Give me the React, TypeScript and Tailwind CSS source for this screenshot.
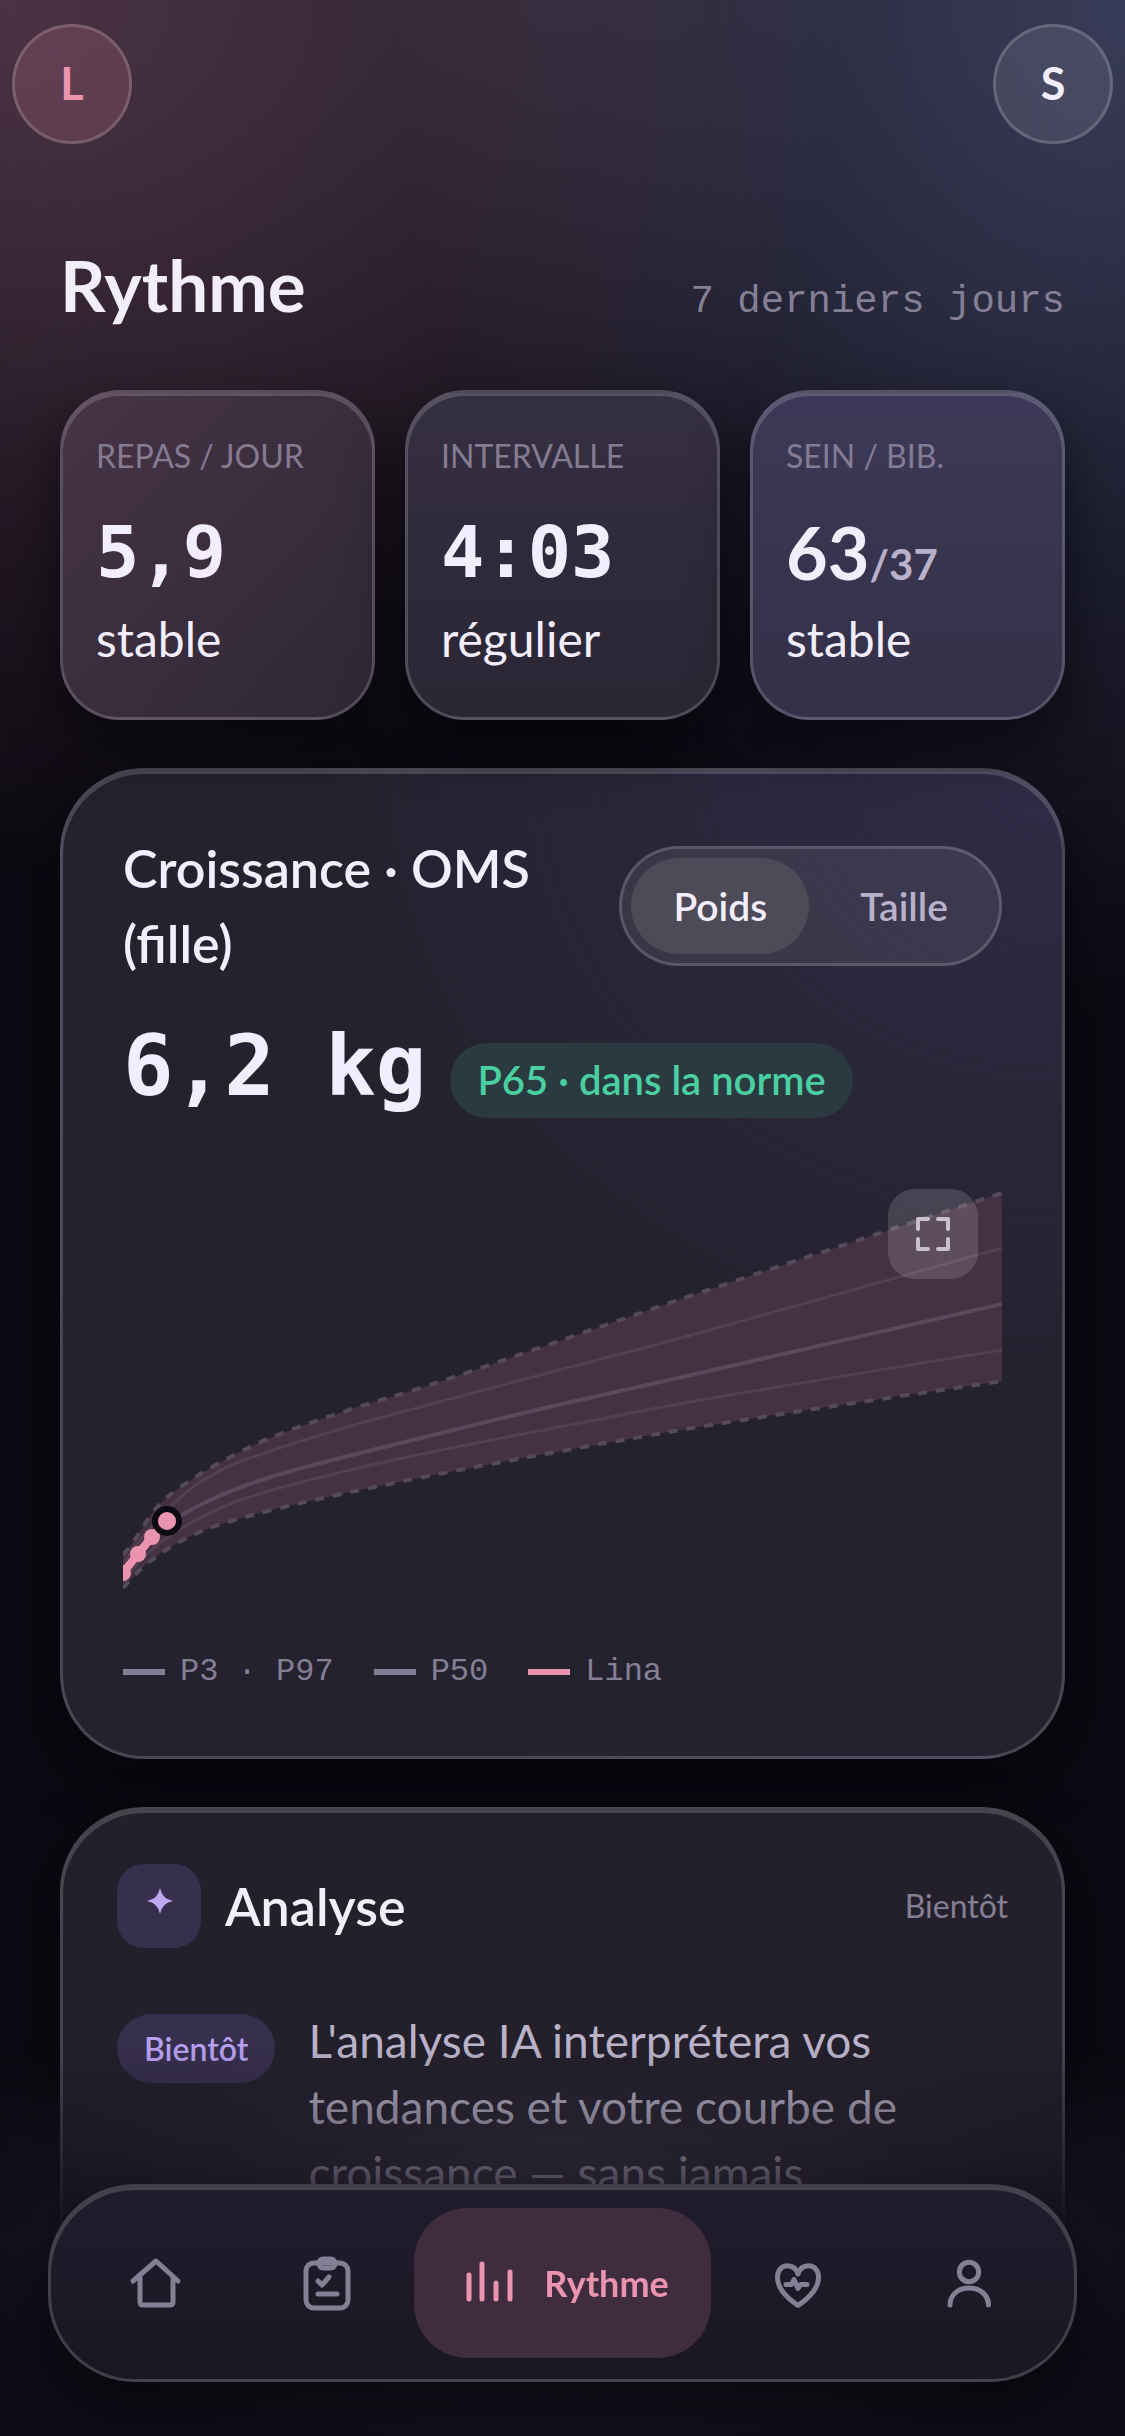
import { FC, ReactNode, useState } from "react";
import clsx from "clsx";

type Point = [number, number];

const P97: Point[] = [[0, 369], [13, 352], [25, 333], [37, 318], [52, 305], [79, 287], [115, 267], [157, 248], [229, 223], [313, 197], [445, 152], [600, 99], [879, 7]];
const P85: Point[] = [[0, 378], [19, 352], [46, 322], [73, 299], [109, 279], [175, 256], [253, 233], [421, 188], [565, 150], [879, 62]];
const P50: Point[] = [[0, 387], [19, 364], [46, 338], [79, 318], [121, 300], [175, 283], [253, 263], [409, 225], [577, 187], [879, 118]];
const P15: Point[] = [[0, 395], [19, 373], [46, 350], [79, 331], [115, 315], [175, 297], [289, 270], [493, 230], [612, 208], [879, 164]];
const P3: Point[] = [[0, 402], [19, 382], [46, 362], [79, 345], [115, 333], [157, 322], [247, 302], [379, 276], [588, 239], [879, 195]];
const LINA: Point[] = [[0, 387], [15, 368], [29, 351], [44, 335]];

// Catmull-Rom to cubic bezier
const segments = (pts: Point[]) =>
  pts.slice(1).map((p, i) => {
    const a = pts[i];
    const before = pts[i - 1] ?? a;
    const after = pts[i + 2] ?? p;
    const c1 = [a[0] + (p[0] - before[0]) / 6, a[1] + (p[1] - before[1]) / 6];
    const c2 = [p[0] - (after[0] - a[0]) / 6, p[1] - (after[1] - a[1]) / 6];
    return `C${c1.join(" ")} ${c2.join(" ")} ${p.join(" ")}`;
  }).join(" ");

const curve = (pts: Point[]) => `M${pts[0].join(" ")} ${segments(pts)}`;

const band = (top: Point[], bottom: Point[]) => {
  const back = [...bottom].reverse();
  return `${curve(top)} L${back[0].join(" ")} ${segments(back)} Z`;
};

const NavIcon: FC<{ children: ReactNode }> = ({ children }) => (
  <svg
    className="size-[66px] shrink-0"
    viewBox="0 0 66 66"
    fill="none"
    stroke="currentColor"
    strokeWidth="5"
    strokeLinecap="round"
    strokeLinejoin="round"
    aria-hidden="true"
  >
    {children}
  </svg>
);

const TABS = [
  {
    id: "home",
    label: "Accueil",
    icon: <path d="M10 31 33 11 55 31M17 27V52Q17 55 20 55H47Q50 55 50 52V27" />,
  },
  {
    id: "journal",
    label: "Journal",
    icon: (
      <>
        <rect x="12" y="13" width="42" height="45" rx="8" />
        <rect x="25" y="9" width="16" height="9" rx="4" />
        <path d="M24 31 28 35 35 27M24 44H43" />
      </>
    ),
  },
  {
    id: "rythme",
    label: "Rythme",
    icon: <path d="M13 25V49M26 14V49M40 33V49M54 22V49" />,
  },
  {
    id: "sante",
    label: "Santé",
    icon: (
      <>
        <path d="M33 55.5C22 48 12.5 39 12.5 27.5C12.5 20 17 15.7 22.5 15.7C28 15.7 31.5 19 33 24C34.5 19 38 15.7 43.5 15.7C49 15.7 53.5 20 53.5 27.5C53.5 39 44 48 33 55.5Z" />
        <path d="M21 34.5H26.5L29 29.5 33 38.5 35.5 34.5H42" />
      </>
    ),
  },
  {
    id: "profil",
    label: "Profil",
    icon: (
      <>
        <circle cx="33" cy="22" r="9.7" />
        <path d="M14 55C14 45 22 38 33 38S52.5 45 52.5 55" />
      </>
    ),
  },
];

const GLASS = "border-[3px] border-white/17 shadow-[inset_0_3px_0_rgba(255,255,255,0.17),0_24px_54px_rgba(4,3,8,0.6)]";

const StatCard: FC<{ label: string; note: string; className: string; children: ReactNode }> = ({ label, note, className, children }) => (
  <div className={clsx("flex flex-col rounded-[60px] px-[33px] pt-[39px] pb-[48px]", GLASS, className)}>
    <div className="text-[32px] leading-[48px] whitespace-nowrap text-[#857b92] uppercase">{label}</div>
    <div className="mt-[30px] flex h-[84px] items-baseline text-[72px] leading-[84px] font-bold">{children}</div>
    <div className="mt-[15px] text-[48px] leading-[60px]">{note}</div>
  </div>
);

const GrowthChart: FC = () => (
  <svg className="block w-full" viewBox="0 0 879 405" role="img" aria-label="Courbe de poids de Lina">
    <path d={band(P97, P3)} fill="#443143" />
    <g fill="none">
      <path d={curve(P85)} strokeWidth="3" stroke="#523f52" />
      <path d={curve(P15)} strokeWidth="3" stroke="#523f52" />
      <path d={curve(P50)} strokeWidth="4" stroke="#5a485d" />
      <path d={curve(P97)} strokeWidth="4" strokeDasharray="9 9" stroke="#544a5b" />
      <path d={curve(P3)} strokeWidth="4" strokeDasharray="9 9" stroke="#544a5b" />
    </g>
    <path d={curve(LINA)} fill="none" stroke="#eb94b0" strokeWidth="8" strokeLinecap="round" />
    {LINA.map(([x, y]) => (
      <circle key={x} cx={x} cy={y} r="8" fill="#eb94b0" />
    ))}
    <circle cx="44" cy="335" r="12" fill="#eb94b0" stroke="#0d0b12" strokeWidth="6" />
  </svg>
);

const Legend: FC<{ color: string; children: ReactNode }> = ({ color, children }) => (
  <li className="flex items-center gap-[15px]">
    <span className={clsx("h-[6px] w-[42px]", color)}></span>
    {children}
  </li>
);

const App: FC = () => {
  const [metric, setMetric] = useState("Poids");
  const [tab, setTab] = useState("rythme");

  return (
    <div className="relative h-screen overflow-hidden bg-[#0b0911] bg-[radial-gradient(ellipse_75%_36%_at_0%_0%,rgba(215,135,170,0.28),transparent),radial-gradient(ellipse_65%_42%_at_100%_0%,rgba(125,140,205,0.34),transparent),radial-gradient(ellipse_100%_26%_at_50%_0%,rgba(150,140,170,0.14),transparent)] font-['Lato',sans-serif] text-[#f3eefe]">
      {/* Header */}
      <header className="flex justify-between px-3 pt-6">
        <button type="button" className="size-[120px] rounded-full border-[3px] border-white/17 bg-[#e88ba6]/17 text-[45px] font-bold text-[#eb94b0]">
          L
        </button>
        <button type="button" className="size-[120px] rounded-full border-[3px] border-white/17 bg-white/9 text-[45px] font-bold">
          S
        </button>
      </header>

      <main className="px-[60px]">
        <div className="mt-24 flex h-[90px] items-baseline justify-between">
          <h1 className="text-[71px] leading-[90px] font-bold">Rythme</h1>
          <span className="font-['Liberation_Mono',monospace] text-[39px] leading-[60px] text-[#857f95]">7 derniers jours</span>
        </div>

        {/* Stats */}
        <div className="mt-[60px] grid grid-cols-3 gap-[30px]">
          <StatCard label="Repas / jour" note="stable" className="bg-linear-to-br from-[#473346] to-[#2d2836]">
            <span className="font-['DejaVu_Sans_Mono',monospace]">5,9</span>
          </StatCard>
          <StatCard label="Intervalle" note="régulier" className="bg-linear-to-b from-[#352f42] to-[#2a2634]">
            <span className="font-['DejaVu_Sans_Mono',monospace]">4:03</span>
          </StatCard>
          <StatCard label="Sein / bib." note="stable" className="bg-linear-to-b from-[#3c3958] to-[#343047]">
            63<span className="text-[42px] text-[#b9b0cb]">/37</span>
          </StatCard>
        </div>

        {/* Growth */}
        <section className={clsx("mt-12 rounded-[84px] bg-[#252230] bg-[radial-gradient(ellipse_70%_60%_at_100%_0%,#2f2c46,transparent)] p-[60px]", GLASS)}>
          <div className="flex items-center justify-between gap-6">
            <h2 className="text-[52px] leading-[75px] font-semibold">Croissance · OMS (fille)</h2>
            <div className="flex h-[120px] shrink-0 gap-[9px] rounded-full border-[3px] border-white/17 bg-white/8 p-[9px]">
              {["Poids", "Taille"].map((name) => (
                <button
                  key={name}
                  type="button"
                  aria-pressed={metric === name}
                  onClick={() => setMetric(name)}
                  className={clsx("rounded-full px-[42px] text-[39px] font-semibold", metric === name ? "bg-[#4e4b58]" : "text-[#b9b0cb]")}
                >
                  {name}
                </button>
              ))}
            </div>
          </div>

          <div className="mt-[37px] flex items-baseline gap-[24px]">
            <span className="font-['DejaVu_Sans_Mono',monospace] text-[84px] leading-[96px] font-bold whitespace-pre">6,2 kg</span>
            <span className="rounded-full bg-[#2b3a41] px-[27px] text-[40px] leading-[75px] font-semibold text-[#4ad0a0]">P65 · dans la norme</span>
          </div>

          <div className="relative mt-[68px]">
            <GrowthChart />
            <button
              type="button"
              aria-label="Agrandir"
              className="absolute top-[3px] right-6 flex size-[90px] items-center justify-center rounded-[27px] bg-white/14 text-[#c9c0d2]"
            >
              <svg className="size-[36px]" viewBox="0 0 36 36" fill="none" stroke="currentColor" strokeWidth="4" strokeLinecap="round" strokeLinejoin="round">
                <path d="M3 13V3H13M23 3H33V13M33 23V33H23M13 33H3V23" />
              </svg>
            </button>
          </div>

          <ul className="mt-[57px] flex gap-[40px] font-['Liberation_Mono',monospace] text-[32px] leading-[48px] text-[#857f95]">
            <Legend color="bg-[#857f95]">P3 · P97</Legend>
            <Legend color="bg-[#857f95]">P50</Legend>
            <Legend color="bg-[#eb94b0]">Lina</Legend>
          </ul>
        </section>

        {/* Analysis */}
        <section className={clsx("mt-12 rounded-[84px] bg-[#231f2b] px-[54px] pt-[54px] pb-[150px]", GLASS)}>
          <div className="flex items-center gap-6">
            <span className="flex size-[84px] items-center justify-center rounded-[27px] bg-[#372f4e]">
              <svg className="size-[60px]" viewBox="0 0 60 60" fill="#bfa9f2" aria-hidden="true">
                <path d="M31 12Q33 23 44 25Q33 27 31 38Q29 27 18 25Q29 23 31 12Z" />
              </svg>
            </span>
            <h2 className="text-[52px] leading-[75px] font-semibold">Analyse</h2>
            <span className="ml-auto text-[32px] text-[#857f95]">Bientôt</span>
          </div>
          <div className="mt-[60px] flex items-start gap-[33px]">
            <span className="mt-[6px] rounded-full bg-[#372f4e] px-[27px] text-[32px] leading-[69px] font-semibold text-[#b7a0f0]">Bientôt</span>
            <p className="text-[46px] leading-[66px] text-[#b9b2c8]">
              L'analyse IA interprétera vos tendances et votre courbe de croissance — sans jamais
            </p>
          </div>
        </section>
      </main>

      {/* Bottom navigation, the page fades out behind it */}
      <div className="pointer-events-none fixed inset-x-0 bottom-0 h-[420px] bg-[radial-gradient(ellipse_62%_80%_at_50%_30%,#2b2735_0%,#0e0c15_100%)] mask-[linear-gradient(to_bottom,transparent_30px,black_220px)]"></div>
      <nav className="fixed inset-x-0 bottom-0 px-12 pb-[54px]">
        <div className={clsx("flex gap-[3px] rounded-[87px] bg-linear-to-b from-[#201c2d] to-[#1a1723] p-[21px]", GLASS)}>
          {TABS.map(({ id, label, icon }) => (
            <button
              key={id}
              type="button"
              aria-label={label}
              onClick={() => setTab(id)}
              className={clsx(
                "flex h-[150px] items-center justify-center",
                tab === id ? "gap-[22px] rounded-[54px] bg-[#3f2d3f] px-[42px] text-[36px] font-bold text-[#eb94b0]" : "flex-1 text-[#857f95]"
              )}
            >
              <NavIcon>{icon}</NavIcon>
              {tab === id && label}
            </button>
          ))}
        </div>
      </nav>
    </div>
  );
};

export default App;
